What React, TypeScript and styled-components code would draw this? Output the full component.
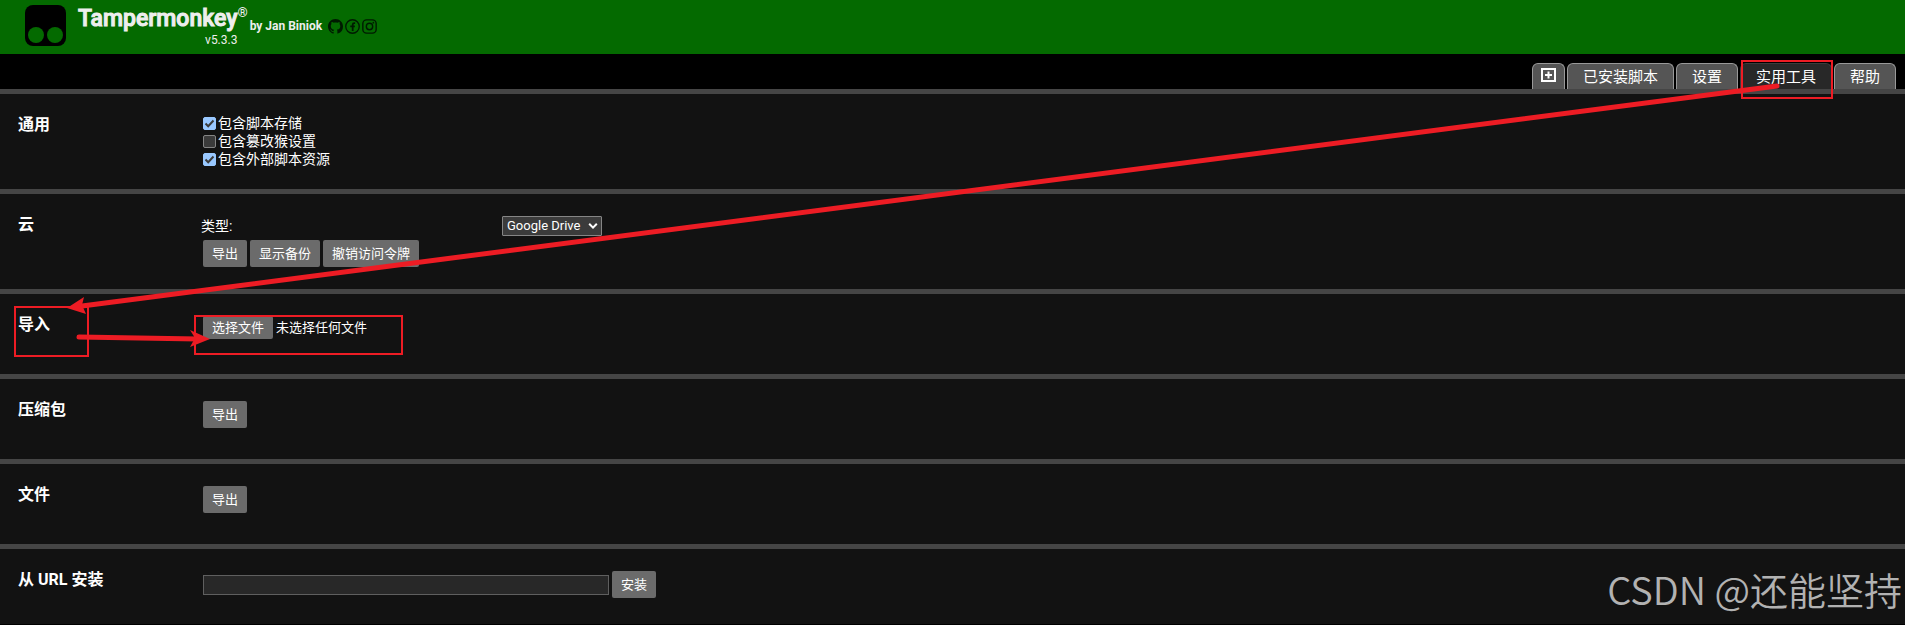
import React from "react";
import styled, { createGlobalStyle } from "styled-components";

const GlobalStyle = createGlobalStyle`
  * { box-sizing: border-box; }
  html { background: #000; }
  body {
    margin: 0;
    background: #000;
    color: #fff;
    font: 14px/18px Roboto, "Noto Sans CJK SC", sans-serif;
  }
`;

const Page = styled.div`
  position: relative;
  overflow: hidden;
  padding-bottom: 1px;
`;

const Header = styled.header`
  display: flex;
  align-items: flex-start;
  height: 54px;
  padding: 5px 25px;
  background: #046a00;
`;

const Logo = styled.svg`
  width: 41px;
  height: 41px;
  margin-right: 12px;
`;

const Brand = styled.div`
  display: flex;
  flex-direction: column;
  align-items: flex-end;
  color: #eee;
`;

const Title = styled.h1`
  margin: 0;
  font-size: 23px;
  line-height: 28px;
  font-weight: 500;
  -webkit-text-stroke: 1px #eee;
`;

const Version = styled.span`
  font-size: 12px;
  line-height: 14px;
`;

const Registered = styled.sup`
  align-self: flex-start;
  color: #eee;
  font-size: 13px;
  line-height: 16px;
  font-weight: 700;
`;

const Author = styled.div`
  display: flex;
  align-items: center;
  gap: 2px;
  margin: 13px 0 0 2px;
  color: #eee;
  font-size: 12px;
  line-height: 16px;
  font-weight: 700;
`;

const AuthorName = styled.span`
  margin-right: 4px;
`;

const SocialLink = styled.a`
  display: flex;
  color: #001a00;
  svg { width: 15px; height: 15px; }
`;

const TabBar = styled.nav`
  display: flex;
  justify-content: flex-end;
  align-items: flex-end;
  gap: 2px;
  height: 35px;
  padding-right: 9px;
`;

const Tab = styled.button<{ $active?: boolean; $narrow?: boolean }>`
  display: flex;
  align-items: center;
  justify-content: center;
  height: 26px;
  margin: 0;
  padding: ${(p) => (p.$narrow ? "0 8px 2px" : "1px 15px 0")};
  border: 1px solid ${(p) => (p.$active ? "#3c3c3c" : "#999")};
  border-bottom: 0;
  border-radius: 6px 6px 0 0;
  background: ${(p) => (p.$active ? "#282828" : "#555")};
  color: #fff;
  font: inherit;
  font-size: 15px;
  line-height: 20px;
`;

const PlusIcon = styled.svg`
  width: 15px;
  height: 15px;
`;

const Section = styled.section<{ $tall?: boolean }>`
  display: flex;
  align-items: flex-start;
  min-height: ${(p) => (p.$tall ? "100px" : "85px")};
  padding: 20px 18px 0;
  border-top: 5px solid #454545;
  background: #121212;

  &:last-of-type { min-height: 80px; }
`;

const SectionTitle = styled.h2`
  flex: none;
  width: 185px;
  margin: 0;
  font-size: 16px;
  line-height: 22px;
  font-weight: 700;
`;

const Content = styled.div`
  display: flex;
  flex: 1;
  flex-direction: column;
  min-width: 0;
`;

const CheckRow = styled.label`
  display: flex;
  align-items: center;
  gap: 2px;
  height: 18px;
`;

const Checkbox = styled.input`
  appearance: none;
  width: 13px;
  height: 13px;
  margin: 0;
  border: 1px solid #858585;
  border-radius: 2px;
  background: #3b3b3b;

  &:checked {
    border-color: #99c8ff;
    background: #99c8ff url("data:image/svg+xml,%3Csvg xmlns='http://www.w3.org/2000/svg' viewBox='0 0 11 11'%3E%3Cpath d='M1.5 5.5l2.7 2.7L9.5 2.5' fill='none' stroke='%233b3b3b' stroke-width='2'/%3E%3C/svg%3E") center / 11px 11px no-repeat;
  }
`;

const FieldRow = styled.div`
  display: flex;
  align-items: center;
  height: 20px;
  margin: 2px 0 4px;
`;

const FieldLabel = styled.label`
  width: 301px;
  margin-left: -2px;
  font-size: 14px;
`;

const SelectBox = styled.div`
  position: relative;
  width: 100px;
  height: 20px;
`;

const Select = styled.select`
  appearance: none;
  width: 100%;
  height: 20px;
  padding: 0 4px;
  border: 1px solid #858585;
  border-radius: 1px;
  background: #3b3b3b;
  color: #fff;
  font: 13px/18px Roboto, sans-serif;
`;

const Chevron = styled.svg`
  position: absolute;
  right: 4px;
  top: 6px;
  width: 10px;
  height: 8px;
  pointer-events: none;
`;

const Actions = styled.div`
  display: flex;
  align-items: center;
  gap: 3px;
  margin-top: 2px;

  ${FieldRow} + & { margin-top: 0; }
`;

const Button = styled.button`
  height: 27px;
  margin: 0;
  padding: 0 9px;
  border: 0;
  border-radius: 2px;
  background: #6b6b6b;
  color: #fff;
  font: inherit;
  font-size: 13px;
  line-height: 20px;
`;

const FilePicker = styled.label`
  display: flex;
  align-items: center;
  align-self: flex-start;
  gap: 3px;
  margin-top: 2px;
  font-size: 13px;
`;

const FileInput = styled.input`
  position: absolute;
  width: 1px;
  height: 1px;
  opacity: 0;
`;

const FileButton = styled.span`
  padding: 2px 9px 1px;
  border-radius: 2px;
  background: #6b6b6b;
  line-height: 20px;
`;

const UrlInput = styled.input`
  width: 406px;
  height: 20px;
  padding: 0 2px;
  border: 1px solid #5f5f5f;
  background: #282828;
  color: #fff;
  font: inherit;
`;

const Annotations = styled.svg`
  position: absolute;
  inset: 0;
  width: 100%;
  height: 100%;
  pointer-events: none;
`;

const Watermark = styled.div`
  position: absolute;
  right: 3px;
  bottom: 11px;
  color: #b2b2b2;
  font: 350 38px/50px "Noto Sans CJK SC", sans-serif;
  white-space: nowrap;
`;

const scriptOptions = [
  { id: "storage", label: "包含脚本存储", checked: true },
  { id: "settings", label: "包含篡改猴设置", checked: false },
  { id: "externals", label: "包含外部脚本资源", checked: true },
];

const tabs = ["已安装脚本", "设置", "实用工具", "帮助"];

export default function App() {
  return (
    <>
      <GlobalStyle />
      <Page>
        <Header>
          <Logo viewBox="0 0 41 41" aria-hidden="true">
            <rect width="41" height="41" rx="8" />
            <circle cx="11" cy="30" r="8" fill="#046a00" />
            <circle cx="30" cy="30" r="8" fill="#046a00" />
          </Logo>
          <Brand>
            <Title>Tampermonkey</Title>
            <Version>v5.3.3</Version>
          </Brand>
          <Registered>®</Registered>
          <Author>
            <AuthorName>by Jan Biniok</AuthorName>
            <SocialLink href="#github" aria-label="GitHub">
              <svg viewBox="0 0 16 16" fill="currentColor">
                <path d="M8 0C3.58 0 0 3.58 0 8c0 3.54 2.29 6.53 5.47 7.59.4.07.55-.17.55-.38 0-.19-.01-.82-.01-1.49-2.01.37-2.53-.49-2.69-.94-.09-.23-.48-.94-.82-1.13-.28-.15-.68-.52-.01-.53.63-.01 1.08.58 1.23.82.72 1.21 1.87.87 2.33.66.07-.52.28-.87.51-1.07-1.78-.2-3.64-.89-3.64-3.95 0-.87.31-1.59.82-2.15-.08-.2-.36-1.02.08-2.12 0 0 .67-.21 2.2.82.64-.18 1.32-.27 2-.27s1.36.09 2 .27c1.53-1.04 2.2-.82 2.2-.82.44 1.1.16 1.92.08 2.12.51.56.82 1.27.82 2.15 0 3.07-1.87 3.75-3.65 3.95.29.25.54.73.54 1.48 0 1.07-.01 1.93-.01 2.2 0 .21.15.46.55.38A8.01 8.01 0 0 0 16 8c0-4.42-3.58-8-8-8z" />
              </svg>
            </SocialLink>
            <SocialLink href="#facebook" aria-label="Facebook">
              <svg viewBox="0 0 16 16" fill="none" stroke="currentColor">
                <circle cx="8" cy="8" r="7.2" strokeWidth="1.4" />
                <path d="M10.8 4.3H9.9C8.7 4.3 8.2 5 8.2 6v6.8M5.6 7.9h4.9" strokeWidth="1.9" />
              </svg>
            </SocialLink>
            <SocialLink href="#instagram" aria-label="Instagram">
              <svg viewBox="0 0 16 16" fill="none" stroke="currentColor">
                <rect x="0.9" y="0.9" width="14.2" height="14.2" rx="4" strokeWidth="1.5" />
                <circle cx="8" cy="8" r="3.4" strokeWidth="1.5" />
                <circle cx="12.1" cy="3.9" r="0.9" fill="currentColor" stroke="none" />
              </svg>
            </SocialLink>
          </Author>
        </Header>

        <TabBar>
          <Tab type="button" $narrow aria-label="+">
            <PlusIcon viewBox="0 0 15 15" fill="none" stroke="#fff">
              <rect x="1" y="1" width="13" height="12" strokeWidth="2" />
              <path d="M7.5 3.5v7M4 7h7" strokeWidth="2" />
            </PlusIcon>
          </Tab>
          {tabs.map((name) => (
            <Tab key={name} type="button" $active={name === "实用工具"}>
              {name}
            </Tab>
          ))}
        </TabBar>

        <Section $tall>
          <SectionTitle>通用</SectionTitle>
          <Content>
            {scriptOptions.map((o) => (
              <CheckRow key={o.id} htmlFor={o.id}>
                <Checkbox id={o.id} type="checkbox" defaultChecked={o.checked} />
                {o.label}
              </CheckRow>
            ))}
          </Content>
        </Section>

        <Section $tall>
          <SectionTitle>云</SectionTitle>
          <Content>
            <FieldRow>
              <FieldLabel htmlFor="cloud">类型:</FieldLabel>
              <SelectBox>
                <Select id="cloud">
                  <option>Google Drive</option>
                </Select>
                <Chevron viewBox="0 0 10 8" aria-hidden="true">
                  <path d="M1.2 1.7L5 5.6l3.8-3.9" fill="none" stroke="#fff" strokeWidth="2" />
                </Chevron>
              </SelectBox>
            </FieldRow>
            <Actions>
              <Button type="button">导出</Button>
              <Button type="button">显示备份</Button>
              <Button type="button">撤销访问令牌</Button>
            </Actions>
          </Content>
        </Section>

        <Section>
          <SectionTitle>导入</SectionTitle>
          <Content>
            <FilePicker htmlFor="import-file">
              <FileInput id="import-file" type="file" />
              <FileButton>选择文件</FileButton>
              未选择任何文件
            </FilePicker>
          </Content>
        </Section>

        <Section>
          <SectionTitle>压缩包</SectionTitle>
          <Content>
            <Actions>
              <Button type="button">导出</Button>
            </Actions>
          </Content>
        </Section>

        <Section>
          <SectionTitle>文件</SectionTitle>
          <Content>
            <Actions>
              <Button type="button">导出</Button>
            </Actions>
          </Content>
        </Section>

        <Section>
          <SectionTitle>从 URL 安装</SectionTitle>
          <Content>
            <Actions>
              <UrlInput type="text" aria-label="从 URL 安装" />
              <Button type="button">安装</Button>
            </Actions>
          </Content>
        </Section>

        <Annotations viewBox="0 0 1905 625" preserveAspectRatio="none" aria-hidden="true">
          <g fill="none" stroke="#ed1c24" strokeWidth="2">
            <rect x="1742" y="61" width="90" height="37" />
            <rect x="15" y="307" width="73" height="49" />
            <rect x="195" y="316" width="207" height="38" />
          </g>
          <g fill="none" stroke="#ed1c24" strokeWidth="5" strokeLinecap="round">
            <path d="M1777 86L82 306" />
            <path d="M79 337L198 339" />
          </g>
          <g fill="#ed1c24">
            <path d="M67 308L84 297L82 305L86 314Z" />
            <path d="M210 339L190 330L195 338L190 347Z" />
          </g>
        </Annotations>
        <Watermark>CSDN @还能坚持</Watermark>
      </Page>
    </>
  );
}
